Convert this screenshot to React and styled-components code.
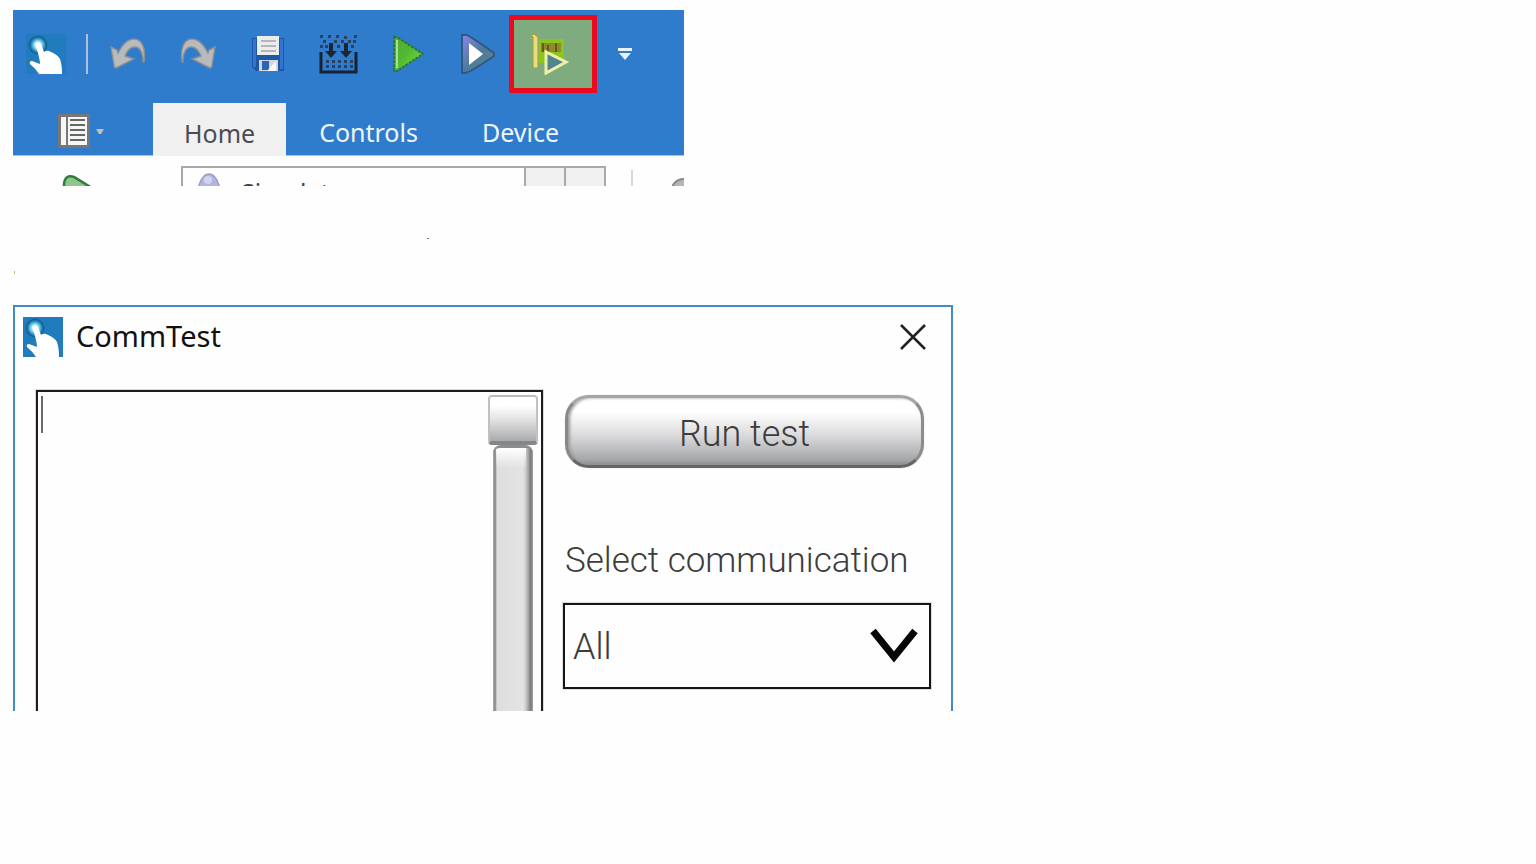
import React from 'react';
import styled, { createGlobalStyle } from 'styled-components';

const Global = createGlobalStyle`
  *, *::before, *::after { box-sizing: border-box; }
  body { margin: 0; background: #fefefe; font-family: "Noto Sans", sans-serif; }
  button, select, textarea { font: inherit; margin: 0; border: 0; padding: 0; background: none; color: inherit; border-radius: 0; }
  svg { display: block; flex: none; }
`;

const Page = styled.main`
  padding: 10px 13px;
`;

const Ribbon = styled.section`
  width: 100%;
  max-width: 671px;
  overflow: hidden;
`;

const QuickBar = styled.div`
  display: flex;
  align-items: center;
  padding: 5px 13px 10px;
  background: #2f7ccc;
`;

const Divider = styled.span`
  width: 2px;
  height: 40px;
  margin: 0 20px;
  background: #a9c1dc;
`;

const ToolGroup = styled.div`
  display: flex;
  align-items: center;
  gap: 30px;
  margin-right: 11px;
`;

const ToolButton = styled.button`
  display: flex;
  align-items: center;
  justify-content: center;
  width: 40px;
  height: 40px;
`;

const ActiveTool = styled(ToolButton)`
  width: 88px;
  height: 78px;
  border: 5px solid #ee0a1c;
  background: #7eac7f;
`;

const MoreButton = styled(ToolButton)`
  width: 14px;
  margin-left: 21px;
`;

const TabBar = styled.nav`
  display: flex;
  gap: 2px;
  height: 53px;
  background: #2f7ccc;
  border-bottom: 1px solid #a5c5e8;
`;

const FileMenu = styled.button`
  display: flex;
  align-items: center;
  justify-content: center;
  gap: 4px;
  width: 138px;
  padding-top: 4px;
`;

const Tab = styled.button`
  padding: 6px 31px 0;
  margin-bottom: ${(p) => (p.$active ? '-1px' : '0')};
  font-size: 25px;
  line-height: 36px;
  color: ${(p) => (p.$active ? '#4b4b55' : '#f1f6fc')};
  background: ${(p) => (p.$active ? '#f0f0f0' : 'transparent')};
`;

const ToolStrip = styled.div`
  display: flex;
  align-items: flex-start;
  height: 30px;
  overflow: hidden;
`;

const RunButton = styled.button`
  flex: none;
  width: 168px;
  padding: 18px 0 0 49px;
`;

const Combo = styled.div`
  display: flex;
  flex: none;
  width: 425px;
  height: 48px;
  margin-top: 10px;
  border: 2px solid #a9a9a9;
`;

const ComboIcon = styled.span`
  padding: 5px 18px 0 14px;
`;

const ComboSelect = styled.select`
  flex: 1;
  min-width: 0;
  height: 48px;
  appearance: none;
  font-size: 25px;
  color: #44444e;
`;

const ComboButton = styled.button`
  width: 40px;
  border-left: 2px solid #a9a9a9;
  background: #f0f0f0;
`;

const StripRule = styled.span`
  flex: none;
  width: 2px;
  height: 30px;
  margin: 14px 0 0 25px;
  background: #d8d8d8;
`;

const StripTool = styled.button`
  flex: none;
  margin: 22px 0 0 38px;
`;

const Specks = styled.div`
  width: 100%;
  max-width: 416px;
  display: flex;
  justify-content: space-between;
  height: 119px;
  padding: 52px 0 31px 1px;
`;

const Speck = styled.i`
  width: ${(p) => (p.$wide ? '2px' : '1px')};
  height: ${(p) => (p.$wide ? '1px' : '3px')};
  align-self: ${(p) => (p.$wide ? 'flex-start' : 'flex-end')};
  background: ${(p) => (p.$wide ? '#77777c' : '#d8b27c')};
`;

const Dialog = styled.section`
  width: 100%;
  max-width: 940px;
  border: 2px solid #438ac8;
  border-bottom: 0;
`;

const TitleBar = styled.header`
  display: flex;
  align-items: center;
  padding: 10px 25px 0 8px;
`;

const Title = styled.h1`
  flex: 1;
  margin: 0 0 0 13px;
  font-size: 29px;
  font-weight: 400;
  line-height: 38px;
  padding-bottom: 2px;
  color: #111;
`;

const CloseButton = styled.button`
  display: flex;
`;

const DialogBody = styled.div`
  display: flex;
  gap: 20px;
  padding: 33px 20px 0 21px;
`;

const LogFrame = styled.div`
  position: relative;
  display: flex;
  flex: 1;
  min-width: 0;
  height: 321px;
  border: 2px solid #1c1c1c;
  border-bottom: 0;
  box-shadow: 0 0 0 1px #dadada;
  clip-path: inset(-1px -1px 0 -1px);
`;

const Log = styled.textarea`
  flex: 1;
  min-width: 0;
  padding: 2px 4px;
  resize: none;
  outline: 0;
  font-size: 29px;
`;

const Caret = styled.span`
  position: absolute;
  left: 3px;
  top: 4px;
  width: 2px;
  height: 37px;
  background: #6a6a6a;
`;

const Scrollbar = styled.div`
  display: flex;
  flex-direction: column;
  align-items: center;
  width: 50px;
  margin: 3px 3px 0 0;
`;

const Thumb = styled.div`
  width: 50px;
  height: 50px;
  border: 2px solid #c0c0c2;
  border-top-color: #bcbcbc;
  border-bottom: 4px solid #858688;
  border-radius: 4px;
  background: linear-gradient(#fff 20%, #e4e3e4 50%, #a9abae);
`;

const Track = styled.div`
  flex: 1;
  width: 40px;
  border-top: 3px solid #8d8d8d;
  border-radius: 8px 8px 0 0;
  background:
    linear-gradient(#fff, rgba(255, 255, 255, 0) 20px) 3px 0 / 30px 20px no-repeat,
    linear-gradient(90deg, #b5b5b5 0, #808080 2px, #dedede 4px, #e3e3e3 30px, #c9c9c9 33px, #777 38px, #aaa 40px);
`;

const Controls = styled.div`
  width: 368px;
  padding-top: 5px;
`;

const TestButton = styled.button`
  display: block;
  width: 359px;
  height: 73px;
  margin-left: 2px;
  padding-top: 4px;
  border: 3px solid;
  border-color: #a5a5a5 #8c8c8c #656565 #888;
  border-radius: 24px;
  background: linear-gradient(#fff 20%, #e7e6e7 45%, #d5d5d7 60%, #a6a7ab 92%, #8c8c8e);
  box-shadow: inset 2px 0 3px #9a9a9a, 0 0 1px #aaa;
  font-family: Roboto, sans-serif;
  font-weight: 300;
  font-size: 36px;
  line-height: 60px;
  color: #3c3c3c;
`;

const FieldLabel = styled.label`
  display: block;
  padding: 72px 0 21px 2px;
  font-family: Roboto, sans-serif;
  font-weight: 300;
  font-size: 35px;
  line-height: 42px;
  color: #3c3c3c;
  white-space: nowrap;
`;

const SelectBox = styled.div`
  display: grid;
  align-items: center;
  height: 86px;
  border: 2px solid #151515;
  box-shadow: 0 0 0 1px #dedede;
  & > * { grid-area: 1 / 1; }
  & > svg { justify-self: end; margin-right: 11px; pointer-events: none; }
`;

const CommSelect = styled.select`
  width: 100%;
  height: 82px;
  padding: 2px 0 0 8px;
  appearance: none;
  outline: 0;
  font-family: Roboto, sans-serif;
  font-weight: 300;
  font-size: 36px;
  color: #3c3c3c;
`;

function TouchLogo() {
  return (
    <svg width="40" height="40" viewBox="0 0 40 40" aria-hidden="true">
      <defs>
        <radialGradient id="glow">
          <stop offset="0" stopColor="#fff" />
          <stop offset=".4" stopColor="#8fdcf5" />
          <stop offset=".65" stopColor="#2b93c4" />
          <stop offset=".85" stopColor="#155f8f" />
          <stop offset="1" stopColor="#217cbd" />
        </radialGradient>
      </defs>
      <path fill="#217cbd" d="M0 0h40v40H0z" />
      <circle cx="12" cy="11" r="10" fill="url(#glow)" />
      <path fill="#fff" d="M9 10q3-4 6 0l3 8q2-2 5-1 8 3 11 8 2 6 2 15H13q-4-6-9-10-1-3 2-3l8 3q0-6-5-20z" />
    </svg>
  );
}

function ArrowIcon({ flip }) {
  return (
    <svg width="36" height="32" viewBox="0 0 36 32" aria-hidden="true">
      <g transform={flip ? 'translate(36 0) scale(-1 1)' : undefined}>
        <path
          d="M1 9l6 3 1 3C13 5 18 1 24 1c8 0 12 9 10 23h-1c0-9-3-15-8-15-5 0-8 4-10 9l9 3-18 9q-2 0-2-3z"
          fill="#b9babb"
          stroke="#8a8f95"
          strokeWidth="1.4"
        />
      </g>
    </svg>
  );
}

function SaveIcon() {
  return (
    <svg width="34" height="36" viewBox="0 0 34 36" aria-hidden="true">
      <path d="M1 2h32v33H5l-4-4z" fill="#1d57a6" />
      <path d="M2 3h3v28H2zM29 3h3v30h-3z" fill="#3275cf" />
      <path d="M6 0h22v19H6z" fill="#ececed" />
      <path d="M10 5h15M10 10h15M10 15h15" stroke="#b5b6b8" strokeWidth="2" />
      <path d="M8 24h19v11H8z" fill="#d2d5da" />
      <path d="M11 25h7v9h-7z" fill="#2865b4" />
      <path d="M25 25v10h-9z" fill="#f8f8f8" />
    </svg>
  );
}

function BuildIcon() {
  const dots = [
    [2, 2], [10, 2], [18, 2], [26, 3], [36, 2], [5, 7], [16, 7], [23, 7], [30, 7], [35, 7],
    [2, 12], [7, 12], [19, 12], [33, 12],
    [8, 27], [14, 27], [20, 27], [26, 27], [32, 27],
    [8, 32], [14, 32], [20, 32], [26, 32], [32, 32],
  ];
  return (
    <svg width="39" height="40" viewBox="0 0 39 40" aria-hidden="true">
      {dots.map(([x, y]) => (
        <rect key={`${x}-${y}`} x={x - 1} y={y - 1} width="3" height="3" fill="#28425f" />
      ))}
      <path d="M2 18v20h35V18" fill="none" stroke="#172332" strokeWidth="3" />
      <path d="M10 9h4v8h4l-6 7-6-7h4zM25 9h4v8h4l-6 7-6-7h4z" fill="#1c2633" />
    </svg>
  );
}

function PlayIcon() {
  return (
    <svg width="32" height="38" viewBox="0 0 32 38" aria-hidden="true">
      <defs>
        <linearGradient id="play" x1="0" y1="0" x2="1" y2="1">
          <stop offset="0" stopColor="#55a83a" />
          <stop offset=".45" stopColor="#4fb92f" />
          <stop offset="1" stopColor="#85dc4c" />
        </linearGradient>
      </defs>
      <path d="M2 2h3l26 17L5 36H2z" fill="url(#play)" stroke="#28773b" strokeWidth="2" strokeDasharray="3 1" />
      <path d="M5 5v28" stroke="#a8df95" strokeWidth="2" />
    </svg>
  );
}

function DebugIcon() {
  return (
    <svg width="36" height="40" viewBox="0 0 36 40" aria-hidden="true">
      <defs>
        <linearGradient id="debug" x1="0" y1="0" x2="1" y2="1">
          <stop offset="0" stopColor="#8a86ee" />
          <stop offset=".5" stopColor="#4f7a9c" />
          <stop offset="1" stopColor="#528b8b" />
        </linearGradient>
      </defs>
      <path d="M2 1h4q3 0 28 18v3Q9 39 5 39H2z" fill="url(#debug)" stroke="#34567f" strokeWidth="2" />
      <path d="M9 9l14 11L9 31z" fill="#fff" />
    </svg>
  );
}

function CommIcon() {
  return (
    <svg width="44" height="42" viewBox="0 0 44 42" aria-hidden="true">
      <path d="M8 6h25v24H8z" fill="#8bc51c" />
      <path d="M10 10h20v9H10z" fill="#8d8a2c" />
      <path d="M12 10v9M17 12v8M25 10v9" stroke="#6b5526" strokeWidth="2" />
      <path d="M0 2l3-1 4 3v31H2V4z" fill="#e5de79" stroke="#a39a3c" />
      <path d="M15 19v21l20-11z" fill="#52858f" stroke="#f0f0a8" strokeWidth="3" />
    </svg>
  );
}

function MenuIcon() {
  return (
    <svg width="32" height="34" viewBox="0 0 32 34" aria-hidden="true">
      <path d="M1.500 1.500h29v31h-29z" fill="#f6f6f6" stroke="#777" strokeWidth="3" />
      <path d="M9 2v30" stroke="#777" strokeWidth="2" />
      <path d="M12 6h15M12 11h15M12 16h15M12 21h15M12 26h15" stroke="#666" strokeWidth="2" />
    </svg>
  );
}

export default function App() {
  return (
    <Page>
      <Global />
      <Ribbon aria-label="Ribbon">
        <QuickBar>
          <TouchLogo />
          <Divider />
          <ToolGroup>
            <ToolButton aria-label="Undo"><ArrowIcon /></ToolButton>
            <ToolButton aria-label="Redo"><ArrowIcon flip /></ToolButton>
            <ToolButton aria-label="Save"><SaveIcon /></ToolButton>
            <ToolButton aria-label="Build"><BuildIcon /></ToolButton>
            <ToolButton aria-label="Run"><PlayIcon /></ToolButton>
            <ToolButton aria-label="Debug"><DebugIcon /></ToolButton>
          </ToolGroup>
          <ActiveTool aria-label="Communication test"><CommIcon /></ActiveTool>
          <MoreButton aria-label="Customize toolbar">
            <svg width="14" height="14" viewBox="0 0 14 14" aria-hidden="true">
              <path d="M0 1h14v3H0zM1 6h12l-6 7z" fill="#e9f1fa" />
            </svg>
          </MoreButton>
        </QuickBar>
        <TabBar>
          <FileMenu aria-label="File menu">
            <MenuIcon />
            <svg width="12" height="7" viewBox="0 0 12 7" aria-hidden="true">
              <path d="M2 1h8L7 6H5z" fill="#c3bfbc" />
            </svg>
          </FileMenu>
          <Tab $active>Home</Tab>
          <Tab>Controls</Tab>
          <Tab>Device</Tab>
        </TabBar>
        <ToolStrip>
          <RunButton aria-label="Run project">
            <svg width="30" height="30" viewBox="0 0 30 30" aria-hidden="true">
              <path d="M2 28V10q1-10 10-7l18 11z" fill="#8fc68f" stroke="#2e7d3b" strokeWidth="2.500" />
            </svg>
          </RunButton>
          <Combo>
            <ComboIcon>
              <svg width="26" height="30" viewBox="0 0 26 30" aria-hidden="true">
                <path d="M1 16C3 7 7 1 12 1s9 6 11 15v14H1z" fill="#b4b4e0" stroke="#9c9cc8" strokeWidth="1.500" />
                <ellipse cx="11" cy="7" rx="4" ry="4" fill="#d2d2f2" />
              </svg>
            </ComboIcon>
            <ComboSelect aria-label="Target">
              <option>Simulator</option>
            </ComboSelect>
            <ComboButton aria-label="Show targets" />
            <ComboButton aria-label="Target settings" />
          </Combo>
          <StripRule />
          <StripTool aria-label="Options">
            <svg width="24" height="24" viewBox="0 0 24 24" aria-hidden="true">
              <circle cx="12" cy="12" r="11" fill="#b5b5b5" stroke="#8a8a8a" strokeWidth="2" />
            </svg>
          </StripTool>
        </ToolStrip>
      </Ribbon>
      <Specks aria-hidden="true">
        <Speck />
        <Speck $wide />
      </Specks>
      <Dialog role="dialog" aria-labelledby="dialog-title">
        <TitleBar>
          <TouchLogo />
          <Title id="dialog-title">CommTest</Title>
          <CloseButton aria-label="Close">
            <svg width="26" height="26" viewBox="0 0 26 26" aria-hidden="true">
              <path d="M1 1l24 24M25 1L1 25" stroke="#222" strokeWidth="2.500" />
            </svg>
          </CloseButton>
        </TitleBar>
        <DialogBody>
          <LogFrame>
            <Log aria-label="Test output" />
            <Caret />
            <Scrollbar aria-hidden="true">
              <Thumb />
              <Track />
            </Scrollbar>
          </LogFrame>
          <Controls>
            <TestButton>Run test</TestButton>
            <FieldLabel htmlFor="communication">Select communication</FieldLabel>
            <SelectBox>
              <CommSelect id="communication">
                <option>All</option>
              </CommSelect>
              <svg width="48" height="36" viewBox="0 0 48 36" aria-hidden="true">
                <path d="M3 3l21 26L45 3" fill="none" stroke="#060606" strokeWidth="7" />
              </svg>
            </SelectBox>
          </Controls>
        </DialogBody>
      </Dialog>
    </Page>
  );
}
